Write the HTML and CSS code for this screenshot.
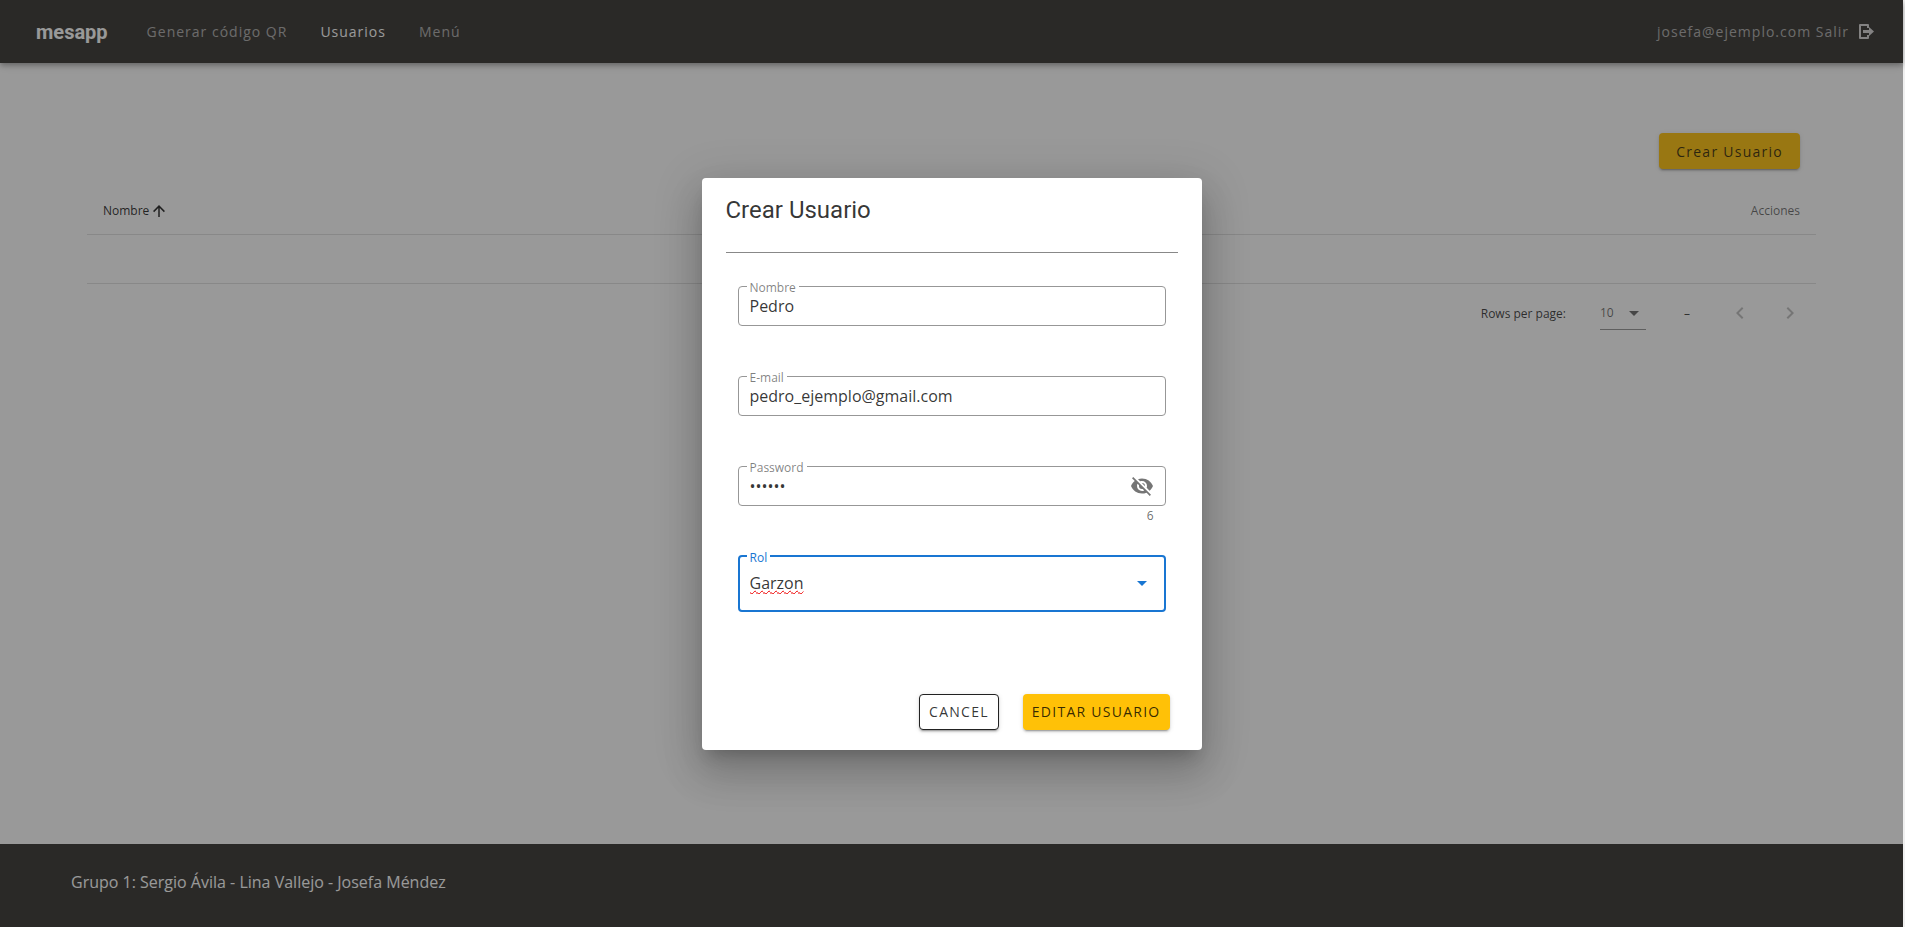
FILE: index.html
```html
<!DOCTYPE html>
<html lang="es">
<head>
<meta charset="utf-8">
<title>mesapp</title>
<link rel="stylesheet" href="styles.css">
</head>
<body>
<div class="app">
  <header class="topbar">
    <a class="brand" href="#">mesapp</a>
    <nav class="nav">
      <a class="nav-link" href="#">Generar código QR</a>
      <a class="nav-link active" href="#">Usuarios</a>
      <a class="nav-link" href="#">Menú</a>
    </nav>
    <a class="logout" href="#">josefa@ejemplo.com Salir
      <svg width="18" height="18" viewBox="0 0 18 18" aria-hidden="true"><path d="M11 5V2H3v13h8v-3" fill="none" stroke="currentColor" stroke-width="2" stroke-linejoin="round"/><path d="M6 7h6V4l5 4.500-5 4.500v-3H6z" fill="currentColor"/></svg>
    </a>
  </header>
  <main class="content">
    <div class="toolbar"><button class="btn btn-create" type="button">Crear Usuario</button></div>
    <table class="users">
      <thead><tr>
        <th class="sorted" scope="col"><span class="sort-label">Nombre<svg width="18" height="18" viewBox="0 0 24 24" aria-hidden="true"><path d="M13 20h-2V8l-5.500 5.500-1.420-1.420L12 4.160l7.920 7.920-1.420 1.420L13 8v12z" fill="currentColor"/></svg></span></th>
        <th class="actions" scope="col">Acciones</th>
      </tr></thead>
      <tbody><tr><td></td><td></td></tr></tbody>
    </table>
    <div class="pager">
      <label for="rows">Rows per page:</label>
      <div class="rows-wrap">
        <select id="rows"><option>10</option></select>
        <svg class="caret" width="24" height="24" viewBox="0 0 24 24" aria-hidden="true"><path d="M7 10l5 5 5-5z" fill="currentColor"/></svg>
      </div>
      <span class="range">–</span>
      <button class="page-btn" type="button" disabled aria-label="Anterior"><svg width="24" height="24" viewBox="0 0 24 24"><path d="M15.410 16.580L10.830 12l4.580-4.590L14 6l-6 6 6 6z" fill="currentColor"/></svg></button>
      <button class="page-btn" type="button" disabled aria-label="Siguiente"><svg width="24" height="24" viewBox="0 0 24 24"><path d="M8.590 16.580L13.170 12 8.590 7.410 10 6l6 6-6 6z" fill="currentColor"/></svg></button>
    </div>
  </main>
  <footer class="footer">Grupo 1: Sergio Ávila - Lina Vallejo - Josefa Méndez</footer>
  <div class="overlay">
    <form class="dialog" role="dialog" aria-labelledby="dialog-title">
      <h2 id="dialog-title">Crear Usuario</h2>
      <hr>
      <div class="fields">
        <div class="field">
          <div class="control">
            <label for="name">Nombre</label>
            <input id="name" type="text" value="Pedro">
          </div>
        </div>
        <div class="field">
          <div class="control">
            <label for="email">E-mail</label>
            <input id="email" type="text" value="pedro_ejemplo@gmail.com">
          </div>
        </div>
        <div class="field">
          <div class="control">
            <label for="password">Password</label>
            <input id="password" type="password" value="123456">
            <button class="eye" type="button" aria-label="Mostrar password"><svg width="24" height="24" viewBox="0 0 24 24"><path d="M11.830 9L15 12.160V12a3 3 0 0 0-3-3h-.17m-4.300.8l1.550 1.550c-.05.210-.08.420-.08.650a3 3 0 0 0 3 3c.220 0 .440-.03.650-.08l1.550 1.550c-.67.330-1.410.530-2.200.530a5 5 0 0 1-5-5c0-.79.200-1.530.530-2.200M2 4.270l2.280 2.280.450.450C3.080 8.300 1.780 10 1 12c1.730 4.390 6 7.500 11 7.500 1.550 0 3.030-.3 4.380-.84l.430.420L19.730 22 21 20.730 3.270 3M12 7a5 5 0 0 1 5 5c0 .640-.13 1.260-.36 1.820l2.930 2.930c1.500-1.250 2.700-2.890 3.430-4.750-1.730-4.390-6-7.500-11-7.500-1.400 0-2.740.250-4 .7l2.170 2.150C10.740 7.130 11.350 7 12 7z" fill="currentColor"/></svg></button>
          </div>
          <span class="counter">6</span>
        </div>
        <div class="field">
          <div class="control focused">
            <label for="role">Rol</label>
            <input id="role" type="text" class="misspelled" value="Garzon" role="combobox" aria-expanded="false">
            <svg class="role-caret" width="24" height="24" viewBox="0 0 24 24" aria-hidden="true"><path d="M7 10l5 5 5-5z" fill="currentColor"/></svg>
          </div>
        </div>
      </div>
      <div class="buttons">
        <button class="btn btn-cancel" type="button">CANCEL</button>
        <button class="btn btn-save" type="button">EDITAR USUARIO</button>
      </div>
    </form>
  </div>
</div>
</body>
</html>
```
FILE: styles.css
```css
* { box-sizing: border-box; }
html { background: #f0f0f0; }
body { margin: 0; font-family: "Open Sans", "Noto Sans", sans-serif; font-size: 16px; color: rgba(0, 0, 0, .8); }
button, input, select { font: inherit; color: inherit; }
a { color: inherit; text-decoration: none; }
svg { display: block; flex: none; }

.app { position: relative; display: flex; flex-direction: column; min-height: 100vh; margin-right: 2px; background: #fff; }
.topbar { display: flex; align-items: center; height: 63px; padding: 0 28px 0 36px; background: #33312e; color: #fff; box-shadow: 0 2px 4px -1px rgba(0, 0, 0, .2), 0 4px 5px rgba(0, 0, 0, .14), 0 1px 10px rgba(0, 0, 0, .12); }
.brand { font: 700 20px/32px Roboto, sans-serif; }
.nav { display: flex; gap: 33px; margin-left: 39px; }
.nav-link, .logout { font-size: 14px; letter-spacing: 1px; color: rgba(255, 255, 255, .6); }
.nav-link.active { color: #fff; }
.logout { display: flex; align-items: center; gap: 8px; margin-left: auto; }
.logout svg { color: rgba(255, 255, 255, .8); }

.content { flex: 1; padding: 70px 87px 0; }
.toolbar { display: flex; justify-content: flex-end; padding: 0 16px 17px; }
.btn { height: 36px; border: 0; border-radius: 4px; font-size: 14px; letter-spacing: .09em; box-shadow: 0 3px 1px -2px rgba(0, 0, 0, .2), 0 2px 2px rgba(0, 0, 0, .14), 0 1px 5px rgba(0, 0, 0, .12); }
.btn-create { padding: 0 17px; background: #ffc107; }
.users { width: 100%; border-collapse: collapse; font-size: 12px; }
.users th { height: 48px; padding: 2px 16px 0; text-align: left; font-weight: 400; color: rgba(0, 0, 0, .6); border-bottom: 1px solid rgba(0, 0, 0, .12); }
.users .sorted { color: rgba(0, 0, 0, .87); }
.sort-label { display: flex; align-items: center; gap: 1px; }
.users .actions { text-align: right; }
.users td { height: 49px; border-bottom: 1px solid rgba(0, 0, 0, .12); }
.pager { display: flex; align-items: center; justify-content: flex-end; height: 59px; padding-right: 8px; font-size: 12px; }
.rows-wrap { position: relative; width: 46px; margin-left: 34px; border-bottom: 1px solid rgba(0, 0, 0, .42); color: rgba(0, 0, 0, .6); }
.rows-wrap select { width: 100%; height: 32px; padding: 0; border: 0; background: none; appearance: none; }
.caret { position: absolute; right: 0; top: 4px; pointer-events: none; }
.range { margin: 0 32px 0 38px; }
.page-btn { display: grid; place-items: center; width: 36px; height: 36px; padding: 0; border: 0; background: none; color: rgba(0, 0, 0, .26); }
.page-btn + .page-btn { margin-left: 14px; }
.footer { padding: 26px 71px 33px; line-height: 24px; background: #33312e; color: #fff; }

.overlay { position: absolute; inset: 0; display: grid; place-items: center; background: rgba(33, 33, 33, .46); }
.dialog { width: 500px; padding: 16px 24px 20px; border-radius: 4px; background: #fff; box-shadow: 0 11px 15px -7px rgba(0, 0, 0, .2), 0 24px 38px 3px rgba(0, 0, 0, .14), 0 9px 46px 8px rgba(0, 0, 0, .12); }
.dialog h2 { margin: 0 0 26px; font: 400 24px/32px Roboto, sans-serif; }
.dialog hr { height: 1px; margin: 0; border: 0; background: #888; }
.fields { display: grid; grid-template-rows: 90px 90px 89px 57px; padding: 33px 12px 0; }
.control { position: relative; display: flex; align-items: center; height: 40px; padding: 0 11px; border: 1px solid #979797; border-radius: 4px; }
.control label { position: absolute; left: 8px; top: -8px; padding: 0 3px; background: #fff; font-size: 12px; line-height: 18px; color: rgba(0, 0, 0, .5); }
.control input { flex: 1; min-width: 0; height: 32px; padding: 0; border: 0; outline: 0; background: none; }
.eye { padding: 0; border: 0; background: none; color: rgba(0, 0, 0, .54); }
.counter { display: block; padding: 2px 12px; text-align: right; font-size: 12px; line-height: 16px; color: rgba(0, 0, 0, .6); }
.control.focused { height: 57px; padding: 0 10px; border: 2px solid #1976d2; }
.focused label, .role-caret { color: #1976d2; }
.control.focused label { left: 7px; color: #1976d2; }
.control .misspelled { text-decoration: underline wavy #e00 1px; }
.buttons { display: flex; justify-content: flex-end; gap: 24px; padding: 82px 8px 0 0; }
.btn-cancel { padding: 0 9px; border: 1px solid #222; background: #fff; }
.btn-save { padding: 0 9px; background: #ffc107; }
```
